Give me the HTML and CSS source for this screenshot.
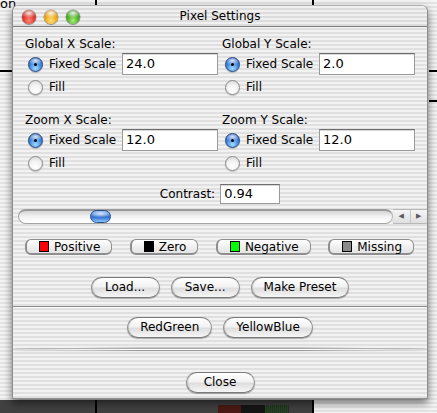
FILE: index.html
```html
<!DOCTYPE html>
<html>
<head>
<meta charset="utf-8">
<title>Pixel Settings</title>
<link rel="stylesheet" href="styles.css">
</head>
<body>
<div class="desk">
  <div class="bg-on">on</div>
  <div class="bg-line bl-left"></div>
  <div class="bg-line bl-v1"></div>
  <div class="bg-line bl-v2"></div>
  <div class="bg-line bl-r1"></div>
  <div class="bg-line bl-r2"></div>
  <div class="bg-bottom">
    <span class="bb-red"></span><span class="bb-black"></span><span class="bb-green"></span>
  </div>
  <div class="bg-bline bb-v1"></div>
  <div class="bg-bline bb-v2"></div>

  <div class="window">
    <div class="titlebar">
      <div class="lights">
        <span class="light red"></span>
        <span class="light yellow"></span>
        <span class="light green"></span>
      </div>
      <div class="title">Pixel Settings</div>
      <div></div>
    </div>

    <div class="content">
      <div class="scales">
        <div class="group">
          <div class="glabel">Global X Scale:</div>
          <div class="row first"><span class="radio on"></span><span>Fixed Scale</span><span class="field">24.0</span></div>
          <div class="row"><span class="radio"></span><span>Fill</span></div>
        </div>
        <div class="group">
          <div class="glabel">Global Y Scale:</div>
          <div class="row first"><span class="radio on"></span><span>Fixed Scale</span><span class="field">2.0</span></div>
          <div class="row"><span class="radio"></span><span>Fill</span></div>
        </div>
        <div class="group">
          <div class="glabel">Zoom X Scale:</div>
          <div class="row first"><span class="radio on"></span><span>Fixed Scale</span><span class="field">12.0</span></div>
          <div class="row"><span class="radio"></span><span>Fill</span></div>
        </div>
        <div class="group">
          <div class="glabel">Zoom Y Scale:</div>
          <div class="row first"><span class="radio on"></span><span>Fixed Scale</span><span class="field">12.0</span></div>
          <div class="row"><span class="radio"></span><span>Fill</span></div>
        </div>
      </div>
      <div class="contrast">
        <span>Contrast:</span>
        <span class="field small">0.94</span>
      </div>
    </div>

    <div class="scrollbar">
      <div class="track"><span class="thumb"></span></div>
      <div class="arrows">
        <span class="arrow">&#9664;</span>
        <span class="arrow">&#9654;</span>
      </div>
    </div>

    <div class="colors">
      <button class="cbtn"><span class="sw sw-red"></span>Positive</button>
      <button class="cbtn"><span class="sw sw-black"></span>Zero</button>
      <button class="cbtn"><span class="sw sw-green"></span>Negative</button>
      <button class="cbtn"><span class="sw sw-gray"></span>Missing</button>
    </div>

    <div class="btnrow row-io">
      <button class="pbtn">Load...</button>
      <button class="pbtn">Save...</button>
      <button class="pbtn">Make Preset</button>
    </div>

    <div class="sep dark"></div>

    <div class="btnrow row-presets">
      <button class="pbtn">RedGreen</button>
      <button class="pbtn">YellowBlue</button>
    </div>

    <div class="sep light"></div>

    <div class="btnrow row-close">
      <button class="pbtn">Close</button>
    </div>
  </div>
</div>
</body>
</html>
```
FILE: styles.css
```css
* { box-sizing: border-box; }

html, body {
  margin: 0;
  padding: 0;
}

body {
  width: 437px;
  height: 413px;
  overflow: hidden;
  font-family: "DejaVu Sans", "Lucida Grande", sans-serif;
  font-size: 12px;
  color: #000;
  background: repeating-linear-gradient(to bottom, #f4f4f4 0 2px, #e4e4e4 2px 4px);
}

.desk {
  position: relative;
  width: 437px;
  height: 413px;
  padding-top: 5px;
}

/* background window content peeking out */
.bg-on {
  position: absolute;
  left: 0;
  top: -3px;
  font-size: 13px;
  line-height: 13px;
}
.bg-line { position: absolute; background: #000; }
.bl-left { left: 0; top: 70px; width: 12px; height: 2px; }
.bl-v1 { left: 95px; top: 0; width: 2px; height: 5px; }
.bl-v2 { left: 312px; top: 0; width: 2px; height: 5px; }
.bl-r1 { left: 429px; top: 70px; width: 8px; height: 2px; }
.bl-r2 { left: 429px; top: 100px; width: 8px; height: 2px; }

.bg-bottom {
  position: absolute;
  left: 0;
  top: 400px;
  width: 313px;
  height: 13px;
  background: #404040;
  display: flex;
  padding-left: 218px;
  padding-top: 5px;
}
.bg-bottom span { height: 8px; }
.bb-red { width: 23px; background: #4a1a14; }
.bb-black { width: 24px; background: #151515; }
.bb-green { width: 24px; background: repeating-linear-gradient(90deg, #1f4a1a 0 1px, #2c2c2c 1px 2px); }
.bg-bline { position: absolute; top: 400px; width: 2px; height: 13px; background: #000; }
.bb-v1 { left: 95px; }
.bb-v2 { left: 312px; }

/* window */
.window {
  position: relative;
  margin-left: 12px;
  width: 416px;
  border: 1px solid #8e8e8e;
  border-top-color: #b0b0b0;
  border-radius: 6px 6px 0 0;
  background: repeating-linear-gradient(to bottom, #f2f2f2 0 2px, #e0e0e0 2px 4px);
  box-shadow: 0 4px 9px rgba(0, 0, 0, 0.55);
  padding-bottom: 5px;
}

.titlebar {
  height: 21px;
  display: grid;
  grid-template-columns: 1fr auto 1fr;
  align-items: center;
  border-bottom: 1px solid #7c7c7c;
  border-radius: 6px 6px 0 0;
  background: repeating-linear-gradient(to bottom, #f0f0f0 0 2px, #dcdcdc 2px 4px);
}

.lights {
  display: flex;
  gap: 8px;
  padding-left: 9px;
  align-items: center;
}

.light {
  width: 14px;
  height: 14px;
  border-radius: 50%;
  display: block;
  box-shadow: 0 0 0 0.5px rgba(0,0,0,0.35), 0 1px 1px rgba(0,0,0,0.25);
}
.light.red {
  background:
    radial-gradient(ellipse 55% 35% at 50% 22%, rgba(255,255,255,0.9), rgba(255,255,255,0) 100%),
    radial-gradient(circle at 50% 75%, #ff8a78 0%, #e0392c 45%, #a01b12 100%);
}
.light.yellow {
  background:
    radial-gradient(ellipse 55% 35% at 50% 22%, rgba(255,255,255,0.9), rgba(255,255,255,0) 100%),
    radial-gradient(circle at 50% 75%, #ffe27a 0%, #efa81c 45%, #a86a08 100%);
}
.light.green {
  background:
    radial-gradient(ellipse 55% 35% at 50% 22%, rgba(255,255,255,0.9), rgba(255,255,255,0) 100%),
    radial-gradient(circle at 50% 75%, #a8ef7c 0%, #4fae2a 45%, #2a6a12 100%);
}

.title {
  font-size: 12px;
  line-height: 21px;
  text-align: center;
}

.content {
  padding: 10px 12px 0 12px;
}

.scales {
  display: grid;
  grid-template-columns: 193px 193px;
  column-gap: 4px;
  row-gap: 15px;
}

.glabel {
  height: 14px;
  line-height: 14px;
}

.row {
  display: flex;
  align-items: center;
  height: 22px;
  margin-top: 1px;
}
.row.first { margin-top: 2px; }

.radio {
  width: 15px;
  height: 15px;
  margin-left: 3px;
  margin-right: 6px;
  border-radius: 50%;
  flex: none;
  border: 1px solid #8a8a8a;
  background: radial-gradient(circle at 50% 75%, #ffffff 0%, #f2f2f2 50%, #d2d2d2 100%);
  box-shadow: 0 1px 1px rgba(0,0,0,0.2);
  position: relative;
}
.radio.on {
  border-color: #24467e;
  background:
    radial-gradient(ellipse 60% 35% at 50% 20%, rgba(255,255,255,0.8), rgba(255,255,255,0) 100%),
    radial-gradient(circle at 50% 80%, #9fdcff 0%, #3f86e0 50%, #1d4c9c 100%);
}
.radio.on::after {
  content: "";
  position: absolute;
  left: 5px;
  top: 5px;
  width: 3px;
  height: 3px;
  border-radius: 50%;
  background: #000;
}

.field {
  margin-left: auto;
  width: 96px;
  height: 22px;
  border: 1px solid #9a9a9a;
  border-top-color: #6e6e6e;
  background: #fff;
  padding-left: 3px;
  font-size: 13px;
  line-height: 20px;
  box-shadow: inset 0 1px 0 #d8d8d8;
}

.contrast {
  margin-top: 10px;
  height: 20px;
  display: flex;
  justify-content: center;
  align-items: center;
  gap: 5px;
}
.field.small {
  margin-left: 0;
  width: 60px;
  height: 20px;
  line-height: 18px;
}

.scrollbar {
  margin-top: 5px;
  height: 15px;
  display: flex;
  align-items: stretch;
}

.track {
  flex: 1;
  margin-left: 5px;
  position: relative;
  border: 1px solid #a4a4a4;
  border-top: 2px solid #9a9a9a;
  border-right: 1px solid #b4b4b4;
  border-radius: 8px;
  background: linear-gradient(to bottom, #d4d4d4, #f4f4f4 50%, #ffffff);
}

.thumb {
  position: absolute;
  left: 71px;
  top: -1px;
  width: 21px;
  height: 13px;
  border-radius: 7px;
  border: 1px solid #2a4f8c;
  background:
    radial-gradient(ellipse 60% 35% at 50% 25%, rgba(255,255,255,0.8), rgba(255,255,255,0) 100%),
    linear-gradient(to bottom, #6aa6ee, #2f6fcf 55%, #8cc6ff);
}

.arrows {
  width: 34px;
  display: flex;
  border-top: 1px solid #b8b8b8;
  border-bottom: 1px solid #b8b8b8;
  background: linear-gradient(to bottom, #f4f4f4, #e0e0e0);
}
.arrow {
  flex: 1;
  text-align: center;
  font-size: 7px;
  line-height: 13px;
  color: #5a5a5a;
}
.arrow + .arrow { border-left: 1px solid #c4c4c4; }

.colors {
  margin-top: 15px;
  padding: 0 13px 0 12px;
  display: flex;
  justify-content: space-between;
}

button {
  font-family: inherit;
  font-size: 12px;
  color: #000;
  margin: 0;
  cursor: default;
}

.cbtn {
  height: 16px;
  display: flex;
  align-items: center;
  gap: 5px;
  padding: 0 11px 0 12px;
  border: 1px solid #8e8e8e;
  border-left-width: 2px;
  border-bottom-width: 2px;
  border-radius: 6px;
  background: linear-gradient(to bottom, #ffffff, #f0f0f0 50%, #e4e4e4);
  line-height: 14px;
}

.sw {
  width: 10px;
  height: 11px;
  display: block;
  border: 1px solid #000;
}
.sw-red { background: #ff0000; }
.sw-black { background: #000; }
.sw-green { background: #00ff00; }
.sw-gray { background: #8a8a8a; }

.btnrow {
  display: flex;
  justify-content: center;
  gap: 11px;
}
.row-io { margin-top: 22px; }
.row-presets { margin-top: 9px; }
.row-close { margin-top: 22px; }

.pbtn {
  height: 21px;
  min-width: 69px;
  padding: 0 12px;
  border-radius: 11px;
  border: 1px solid #7a7a7a;
  border-left-color: #8e8e8e;
  border-right-color: #8e8e8e;
  background: linear-gradient(to bottom, #ffffff 0%, #f2f2f2 45%, #dedede 55%, #f6f6f6 100%);
  box-shadow: 0 1px 1px rgba(0,0,0,0.3), inset 1px 0 0 #c8c8c8;
  line-height: 19px;
  text-align: center;
}

.sep {
  display: block;
  width: 100%;
  height: 2px;
  margin-top: 8px;
}
.sep.dark {
  border-top: 1px solid #8a8a8a;
  border-bottom: 1px solid #fbfbfb;
}
.sep.light {
  margin-top: 10px;
  height: 2px;
  border-top: 1px solid #a8a8a8;
  border-bottom: 1px solid #ffffff;
}
```
